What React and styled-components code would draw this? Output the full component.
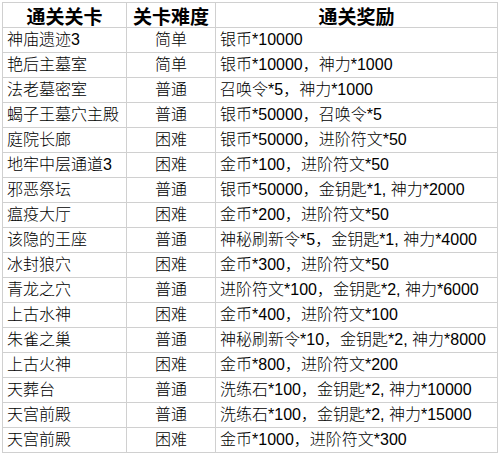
import React from 'react';
import styled, { createGlobalStyle } from 'styled-components';

const GlobalStyle = createGlobalStyle`
  html, body {
    margin: 0;
    padding: 0;
    background: #fff;
  }
  body {
    font-family: "Liberation Sans", "Noto Sans CJK SC", sans-serif;
    color: #000;
  }
`;

const Sheet = styled.div`
  display: grid;
  grid-template-columns: 123px 88px 281px;
  grid-auto-rows: 24px;
  gap: 1px;
  width: max-content;
  margin: 2px 0 0 2px;
  padding: 1px;
  background: #d0d0d0;
`;

const HeadCell = styled.div`
  display: flex;
  align-items: center;
  justify-content: center;
  background: #fff;
  font-family: "Noto Sans CJK SC", sans-serif;
  font-size: 19px;
  font-weight: 700;
  line-height: 1;
`;

const Cell = styled.div`
  display: flex;
  align-items: center;
  justify-content: ${(p) => (p.center ? 'center' : 'flex-start')};
  padding: 0 4px;
  background: #fff;
  font-size: 16px;
  font-weight: 300;
  line-height: 1;
  white-space: nowrap;
  overflow: hidden;
`;

const rows = [
  ['神庙遗迹3', '简单', '银币*10000'],
  ['艳后主墓室', '简单', '银币*10000，神力*1000'],
  ['法老墓密室', '普通', '召唤令*5，神力*1000'],
  ['蝎子王墓穴主殿', '普通', '银币*50000，召唤令*5'],
  ['庭院长廊', '困难', '银币*50000，进阶符文*50'],
  ['地牢中层通道3', '困难', '金币*100，进阶符文*50'],
  ['邪恶祭坛', '普通', '银币*50000，金钥匙*1, 神力*2000'],
  ['瘟疫大厅', '困难', '金币*200，进阶符文*50'],
  ['该隐的王座', '普通', '神秘刷新令*5，金钥匙*1, 神力*4000'],
  ['冰封狼穴', '困难', '金币*300，进阶符文*50'],
  ['青龙之穴', '普通', '进阶符文*100，金钥匙*2, 神力*6000'],
  ['上古水神', '困难', '金币*400，进阶符文*100'],
  ['朱雀之巢', '普通', '神秘刷新令*10，金钥匙*2, 神力*8000'],
  ['上古火神', '困难', '金币*800，进阶符文*200'],
  ['天葬台', '普通', '洗练石*100，金钥匙*2, 神力*10000'],
  ['天宫前殿', '普通', '洗练石*100，金钥匙*2, 神力*15000'],
  ['天宫前殿', '困难', '金币*1000，进阶符文*300'],
];

export default function App() {
  return (
    <>
      <GlobalStyle />
      <Sheet>
        <HeadCell>通关关卡</HeadCell>
        <HeadCell>关卡难度</HeadCell>
        <HeadCell>通关奖励</HeadCell>
        {rows.map(([stage, level, reward], i) => (
          <React.Fragment key={i}>
            <Cell>{stage}</Cell>
            <Cell center>{level}</Cell>
            <Cell>{reward}</Cell>
          </React.Fragment>
        ))}
      </Sheet>
    </>
  );
}
